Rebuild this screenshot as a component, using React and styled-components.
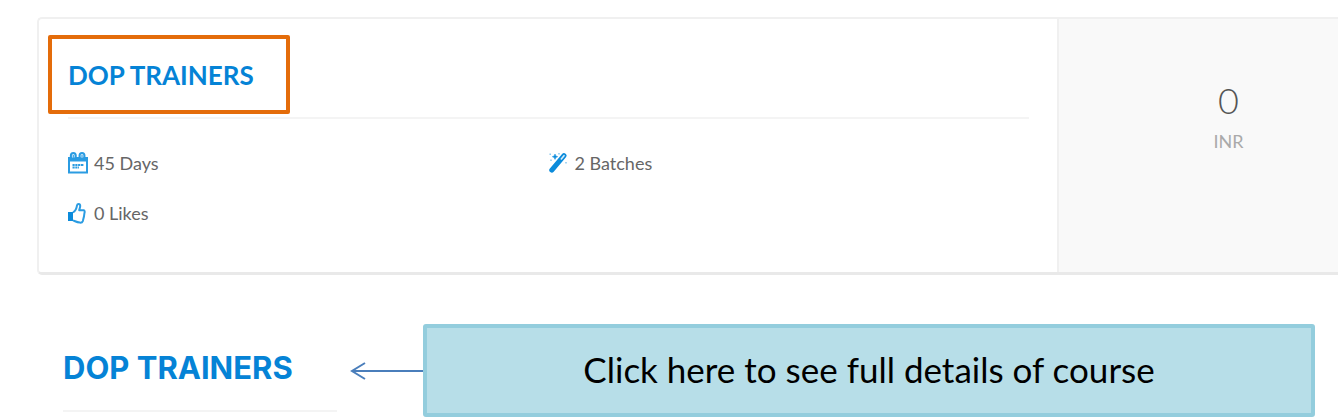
import React from "react";
import styled, { createGlobalStyle } from "styled-components";

const Global = createGlobalStyle`
  * { box-sizing: border-box; }
  body { margin: 0; background: #fff; font-family: Lato, "Liberation Sans", sans-serif; }
  h2, p, ul { margin: 0; padding: 0; }
`;

const Page = styled.main`
  overflow: hidden;
`;

const Card = styled.article`
  display: flex;
  margin: 17px 0 0 37px;
  border: 2px solid #f0f0f0;
  border-right: 0;
  border-bottom: 3px solid #e9e9e9;
  border-radius: 5px 0 0 5px;
`;

const Details = styled.div`
  flex: 1;
  min-height: 253px;
  padding: 16px 28px 0 9px;
`;

const Highlight = styled.div`
  display: flex;
  align-items: center;
  width: 242px;
  height: 79px;
  padding-left: 16px;
  border: 4px solid #e46c0a;
  border-radius: 2px;
`;

const Title = styled.h2`
  font-size: ${(p) => p.$size}px;
  font-family: ${(p) => p.$family};
  font-weight: 700;
  line-height: 32px;
  white-space: nowrap;
`;

const TitleLink = styled.a`
  color: #0583d6;
  text-decoration: none;
`;

const Facts = styled.ul`
  display: grid;
  grid-template-columns: 1fr 1fr;
  row-gap: 20px;
  margin: 3px 0 0 20px;
  padding-top: 29px;
  border-top: 2px solid #f4f4f4;
  list-style: none;
`;

const Fact = styled.li`
  display: flex;
  align-items: center;
  gap: 6px;
  height: 30px;
  color: #666;
  font-size: 18px;
  white-space: nowrap;
`;

const Icon = styled.svg`
  width: 20px;
  height: 22px;
  flex: none;
`;

const Price = styled.aside`
  width: 281px;
  padding: 60px 0 0 60px;
  border-left: 2px solid #f0f0f0;
  background: #f9f9f9;
  text-align: center;
`;

const Amount = styled.p`
  color: #555;
  font-size: 36px;
  font-weight: 300;
  line-height: 42px;
`;

const Currency = styled.p`
  color: #aaa;
  font-size: 18px;
  font-weight: 400;
  line-height: 40px;
`;

const Guide = styled.section`
  display: flex;
  margin: 49px 23px 0 63px;
`;

const Heading = styled.header`
  width: 274px;
  height: 88px;
  padding-top: 28px;
  border-bottom: 2px solid #f4f4f4;
`;

const Arrow = styled.svg`
  flex: none;
  width: 73px;
  height: 20px;
  margin: 37px 0 0 13px;
`;

const Callout = styled.button`
  flex: 1;
  height: 93px;
  padding: 0 0 4px;
  border: 4px solid #93cddd;
  border-radius: 3px;
  background: #b7dee8;
  color: #000;
  font-family: Lato, sans-serif;
  font-size: 35px;
`;

const CalendarIcon = () => (
  <Icon viewBox="0 0 20 22" aria-hidden="true" fill="none" stroke="#2b9ce2">
    <path d="M1 7h18v13.5H1z" strokeWidth="2" />
    <path d="M0 5h20v4.5H0z" fill="#2b9ce2" stroke="none" />
    <ellipse cx="5.3" cy="4" rx="2.5" ry="2.9" fill="#d7edfa" strokeWidth="2" />
    <ellipse cx="14" cy="4" rx="2.5" ry="2.9" fill="#d7edfa" strokeWidth="2" />
    <path d="M5.3 3v3M14 3v3" strokeWidth="1" />
    <path d="M4.5 13H16M4.5 15.5H11" strokeWidth="1.8" strokeDasharray="2.2 .6" />
  </Icon>
);

const LikeIcon = () => (
  <Icon viewBox="0 0 20 22" aria-hidden="true" fill="none" stroke="#2b9ce2">
    <path d="M0 10h5v9H0z" fill="#0b8bdb" stroke="none" />
    <path d="M5 10.5C7.5 9 8.6 6.5 9 3.4 9.3 1.7 12.3 1.2 12.2 4c0 1.5-.7 2.7-1 4.2h4.6c1.2.3.9 2.1.6 3.1-.1 2.9-.9 5.5-1.6 7.8-.5 1.3-1.5 1.7-3 1.5-2.3-.3-4.2-1.2-6.8-2.2" strokeWidth="2" strokeLinejoin="round" />
  </Icon>
);

const WandIcon = () => (
  <Icon viewBox="0 0 20 22" aria-hidden="true" fill="none" stroke="#0b8bdb">
    <path d="M2.8 18.2 15 3.6" strokeWidth="5" strokeLinecap="round" />
    <path d="m12.3 7 2.7-3.3" stroke="#d7edfa" strokeWidth="1.6" strokeLinecap="round" />
    <path d="M6 2l.8 1.9 1.9.8-1.9.8L6 7.4l-.8-1.9-1.9-.8 1.9-.8z" fill="#0b8bdb" strokeWidth=".5" />
    <path d="M1.2 1.5v1.6M10 1v1.6M17 10v1.6M2 7.5v1.6" strokeWidth="1.4" opacity=".5" />
  </Icon>
);

const facts = [
  { Glyph: CalendarIcon, text: "45 Days" },
  { Glyph: WandIcon, text: "2 Batches" },
  { Glyph: LikeIcon, text: "0 Likes" },
];

export default function App() {
  return (
    <Page>
      <Global />
      <Card>
        <Details>
          <Highlight>
            <Title $size={26} $family="Lato, sans-serif">
              <TitleLink href="#course">DOP TRAINERS</TitleLink>
            </Title>
          </Highlight>
          <Facts>
            {facts.map(({ Glyph, text }) => (
              <Fact key={text}>
                <Glyph />
                {text}
              </Fact>
            ))}
          </Facts>
        </Details>
        <Price>
          <Amount>0</Amount>
          <Currency>INR</Currency>
        </Price>
      </Card>
      <Guide>
        <Heading>
          <Title $size={31} $family="Inter, sans-serif">
            <TitleLink href="#course">DOP TRAINERS</TitleLink>
          </Title>
        </Heading>
        <Arrow viewBox="0 0 73 20" aria-hidden="true" fill="none" stroke="#4a7ebb" strokeWidth="2">
          <path d="M73 10H2M15 2 2 10l13 8" />
        </Arrow>
        <Callout type="button">Click here to see full details of course</Callout>
      </Guide>
    </Page>
  );
}
